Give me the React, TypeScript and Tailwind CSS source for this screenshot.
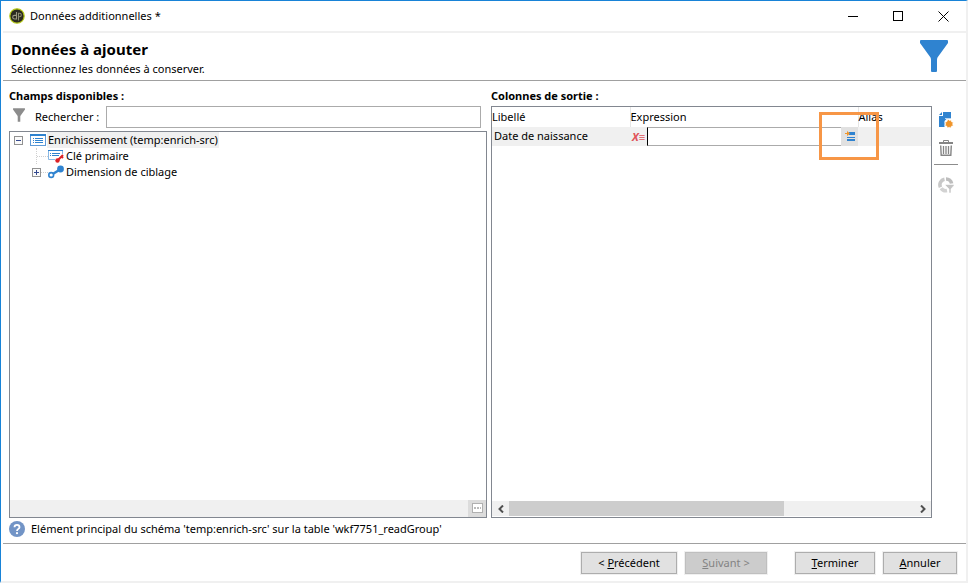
import { ReactNode, useState } from "react";

function AppLogo() {
  return (
    <svg className="h-4 w-4" viewBox="0 0 16 16" aria-hidden="true">
      <circle cx="8" cy="8" r="7.2" fill="#2b2a20" stroke="#b5c916" strokeWidth="1.2" />
      <path d="M7.500 4v7H5.500a1.500 1.500 0 0 1 0-3.600h2" fill="none" stroke="#9a9880" strokeWidth="1.100" />
      <path d="M9.500 12.500V5.200h1a1.500 1.500 0 0 1 0 3.600h-1" fill="none" stroke="#8f8e74" strokeWidth="1.100" />
    </svg>
  );
}

function FunnelIcon({ className }: { className: string }) {
  return (
    <svg className={className} viewBox="0 0 28 32" aria-hidden="true">
      <path
        fill="currentColor"
        d="M1 0h26q1 0 1 1v2L17.5 17.5Q17 18.500 17 20v11q0 1-1 1h-4q-1 0-1-1V20q0-1.500-.5-2.500L0 3V1q0-1 1-1z"
      />
    </svg>
  );
}

function TableIcon() {
  return (
    <svg className="h-4 w-4" viewBox="0 0 16 16" aria-hidden="true">
      <rect x="0.500" y="2.500" width="15" height="11" fill="#fff" stroke="#5f9bd8" />
      <path d="M0 3h16" stroke="#2f83d0" strokeWidth="2" />
      <path d="M3 6.500h1M3 8.500h1M3 10.500h1M5 6.500h8M5 8.500h8M5 10.500h8" stroke="#2f83d0" />
    </svg>
  );
}

function KeyIcon() {
  return (
    <svg className="h-4 w-4" viewBox="0 0 16 16" aria-hidden="true">
      <path d="M7 11.500H0.500v-9h14V6" fill="none" stroke="#8ab8e4" />
      <path d="M0 2.500h15" stroke="#2f83d0" />
      <path d="M2 5.500h1M2 7.500h1M4 5.500h8M4 7.500h7" stroke="#2f83d0" />
      <path d="M10 12l5-5M13 8l2 2" stroke="#dc2226" strokeWidth="2" />
      <circle cx="9.500" cy="12.500" r="2.200" fill="#dc2226" />
    </svg>
  );
}

function LinkIcon() {
  return (
    <svg className="h-4 w-4" viewBox="0 0 16 16" aria-hidden="true">
      <path d="M4 10.500l8-5" stroke="#2f83d0" strokeWidth="2.500" />
      <circle cx="3.200" cy="11" r="2.400" fill="#fff" stroke="#2f83d0" strokeWidth="1.600" />
      <circle cx="12.500" cy="5" r="3.400" fill="#2f83d0" />
    </svg>
  );
}

function EditIcon() {
  return (
    <svg className="h-3 w-3" viewBox="0 0 12 12" aria-hidden="true">
      <path d="M5 1h6v3H5zM3 6h8v1H3zM3 8h8v2H3z" fill="#2f83d0" />
      <path d="M1 2h2V0l3 2.500L3 5V3H1z" fill="#f0952a" />
    </svg>
  );
}

function NewIcon() {
  return (
    <svg className="h-4 w-4" viewBox="0 0 16 16" aria-hidden="true">
      <path d="M5 0h8v6.500H9L6.500 9v6H1V4h4z" fill="#2f83d0" />
      <path d="M1 3L4 0v3z" fill="#2f83d0" />
      <path d="M7 6.500h6" stroke="#b9d7f1" />
      <path
        d="M10 7l1.200 1.400L13 8l.5 1.800 1.800.6L14.600 12l.7 1.700-1.900.5-.6 1.700-1.700-.7-1.600.7-.7-1.700-1.900-.6.8-1.700-.7-1.600 1.800-.6z"
        fill="#f0952a"
        stroke="#fff"
        strokeWidth="0.600"
      />
    </svg>
  );
}

function TrashIcon() {
  return (
    <svg className="h-4 w-4" viewBox="0 0 16 16" fill="none" stroke="#858585" aria-hidden="true">
      <path d="M1 3h14" strokeWidth="2" />
      <path d="M5.500 2.500v-2h5v2" />
      <path d="M2.700 5.500l.5 9.700h9.600l.5-9.700" strokeWidth="1.400" />
      <path d="M5.500 6v8M8 6v8M10.500 6v8" strokeWidth="1.300" />
    </svg>
  );
}

function DistributionIcon() {
  return (
    <svg className="h-4 w-4" viewBox="0 0 16 16" fill="none" aria-hidden="true">
      <path d="M6.500 2.200a5.600 5.600 0 0 0-4 8" stroke="#c8c8c8" strokeWidth="3.600" />
      <path d="M8 2a5.600 5.600 0 0 1 5.600 4.500" stroke="#bdbdbd" strokeWidth="3.600" />
      <path d="M3.200 11.200A5.600 5.600 0 0 0 9 13.600" stroke="#d2d2d2" strokeWidth="3.600" />
      <path d="M7.500 7.500H16v1L13 12v4h-2v-4L7.500 8.500z" fill="#c4c4c4" stroke="#fff" strokeWidth="0.600" />
    </svg>
  );
}

function Toggle({ open, label, onClick }: { open: boolean; label: string; onClick?: () => void }) {
  return (
    <button type="button" aria-label={label} aria-expanded={open} onClick={onClick} className="relative z-10">
      <svg className="h-[9px] w-[9px]" viewBox="0 0 9 9" fill="none" aria-hidden="true">
        <rect x="0.500" y="0.500" width="8" height="8" fill="#fafafa" stroke="#919191" />
        <path d={open ? "M2 4.500h5" : "M2 4.500h5M4.500 2v5"} stroke="#34498f" />
      </svg>
    </button>
  );
}

function FooterButton({ children, disabled, className }: { children: ReactNode; disabled?: boolean; className: string }) {
  return (
    <button
      type="button"
      disabled={disabled}
      className={`h-[22px] border border-[#adadad] bg-[#e1e1e1] text-[11px] outline outline-[#f0f0f0] disabled:border-[#bfbfbf] disabled:bg-[#cccccc] disabled:text-[#838383] ${className}`}
    >
      {children}
    </button>
  );
}

function TitleBar() {
  return (
    <div className="flex h-[30px] items-center pl-2">
      <AppLogo />
      <span className="ml-[5px] flex-1 text-[11px] leading-4">Données additionnelles *</span>
      <button type="button" aria-label="Réduire" className="flex h-full w-[45px] items-center justify-center">
        <svg className="h-[11px] w-[11px]" viewBox="0 0 11 11" stroke="#000">
          <path d="M0 5.500h10" />
        </svg>
      </button>
      <button type="button" aria-label="Agrandir" className="flex h-full w-[45px] items-center justify-center">
        <svg className="h-[11px] w-[11px]" viewBox="0 0 11 11" fill="none" stroke="#000">
          <rect x="0.500" y="0.500" width="9" height="9" />
        </svg>
      </button>
      <button type="button" aria-label="Fermer" className="flex h-full w-[45px] items-center justify-center">
        <svg className="h-[11px] w-[11px]" viewBox="0 0 11 11" stroke="#000">
          <path d="M0.500 0.500l10 10M10.500 0.500l-10 10" />
        </svg>
      </button>
    </div>
  );
}

function FieldTree() {
  const [open, setOpen] = useState(true);

  return (
    <div className="flex min-h-0 flex-1 flex-col border border-[#828790]">
      <ul className="flex-1 text-[11px] leading-4">
        <li>
          <div className="flex h-4 items-center pl-1">
            <Toggle open={open} label="Enrichissement" onClick={() => setOpen(!open)} />
            <span className="ml-[7px]">
              <TableIcon />
            </span>
            <span className="ml-px bg-[#f0f0f0] px-px">Enrichissement (temp:enrich-src)</span>
          </div>
          {open && (
            <ul className="ml-[26px]">
              <li className="flex h-4 items-center border-l border-dotted border-[#d0d0d0]">
                <span className="w-[11px] border-t border-dotted border-[#d0d0d0]" />
                <KeyIcon />
                <span className="ml-0.5">Clé primaire</span>
              </li>
              <li className="-ml-1 flex h-4 items-center">
                <Toggle open={false} label="Dimension de ciblage" />
                <span className="w-[7px] border-t border-dotted border-[#d0d0d0]" />
                <LinkIcon />
                <span className="ml-0.5">Dimension de ciblage</span>
              </li>
            </ul>
          )}
        </li>
      </ul>
      <div className="flex h-[17px] justify-end bg-[#f0f0f0]">
        <button type="button" aria-label="Plus" className="flex w-[18px] items-center justify-center bg-[#dcdcdc]">
          <svg className="h-[11px] w-[11px]" viewBox="0 0 11 11" aria-hidden="true">
            <rect x="0.500" y="0.500" width="10" height="9" fill="#fff" stroke="#b0b0b0" />
            <path d="M2 5h2M5 5h2M8 5h1" stroke="#777" />
          </svg>
        </button>
      </div>
    </div>
  );
}

function OutputColumns() {
  const [expression, setExpression] = useState("");

  return (
    <div className="flex min-h-0 flex-1 flex-col border border-[#828790]">
      <div className="flex-1">
        <table className="w-full table-fixed text-left text-[11px]">
          <colgroup>
            <col className="w-[138px]" />
            <col className="w-[228px]" />
            <col />
          </colgroup>
          <thead>
            <tr className="h-5">
              <th className="border-r border-[#e5e5e5] p-0 font-normal">Libellé</th>
              <th className="border-r border-[#e5e5e5] p-0 font-normal">Expression</th>
              <th className="p-0 font-normal">Alias</th>
            </tr>
          </thead>
          <tbody>
            <tr className="h-[19px] bg-[#f0f0f0]">
              <td className="p-0 pl-0.5">Date de naissance</td>
              <td className="p-0">
                <div className="flex items-center">
                  <span className="w-[17px] text-center text-[11px] leading-4 font-bold text-[#e0555a]">
                    <i>X</i>≡
                  </span>
                  <input
                    type="text"
                    aria-label="Expression"
                    value={expression}
                    onChange={(e) => setExpression(e.target.value)}
                    className="h-[19px] min-w-0 flex-1 border border-r-0 border-[#ababab] border-l-black bg-white px-1 outline-none"
                  />
                  <div className="relative">
                    <button
                      type="button"
                      aria-label="Editer l'expression"
                      className="flex h-[19px] w-[17px] items-center justify-center bg-[#e1e1e1]"
                    >
                      <EditIcon />
                    </button>
                    <span className="pointer-events-none absolute -top-[15px] -left-[22px] h-12 w-[60px] border-3 border-[#f79646]" />
                  </div>
                </div>
              </td>
              <td className="p-0" />
            </tr>
          </tbody>
        </table>
      </div>
      <div className="mb-px flex h-[15px] bg-[#f0f0f0]">
        <button type="button" aria-label="Défiler à gauche" className="flex w-[17px] items-center justify-center">
          <svg className="h-2 w-2" viewBox="0 0 8 8" fill="none" stroke="#505050" strokeWidth="2">
            <path d="M6 0.500L2.500 4 6 7.500" />
          </svg>
        </button>
        <div className="flex-1">
          <div className="h-full w-[68%] bg-[#cdcdcd]" />
        </div>
        <button type="button" aria-label="Défiler à droite" className="flex w-[17px] items-center justify-center">
          <svg className="h-2 w-2" viewBox="0 0 8 8" fill="none" stroke="#505050" strokeWidth="2">
            <path d="M2 0.500L5.500 4 2 7.500" />
          </svg>
        </button>
      </div>
    </div>
  );
}

function App() {
  return (
    <div className="flex h-screen min-h-96 flex-col border-t border-r-2 border-b-2 border-l border-t-[#1883d7] border-r-[#f0f0f0] border-b-[#f0f0f0] border-l-[#1883d7] bg-white font-['Noto_Sans','Open_Sans',sans-serif] text-black">
      <TitleBar />
      <header className="ml-0.5 flex h-[50px] justify-between border-t-2 border-b border-t-[#f0f0f0] border-b-[#a0a0a0] pr-[18px] pl-2">
        <div className="pt-1.5">
          <h1 className="text-[15px] leading-5 font-bold">Données à ajouter</h1>
          <p className="text-[11px] leading-5">Sélectionnez les données à conserver.</p>
        </div>
        <FunnelIcon className="mt-[7px] h-8 w-7 text-[#2f83d0]" />
      </header>

      <main className="flex min-h-0 flex-1 gap-1 pt-[7px] pr-2 pl-2">
        <section className="flex min-w-0 flex-[478] flex-col">
          <h2 className="h-[18px] text-[11px] leading-4 font-bold">Champs disponibles :</h2>
          <div className="mb-[3px] flex items-center pr-1.5">
            <FunnelIcon className="mb-1 ml-1 h-3.5 w-3 text-[#8c8c8c]" />
            <label htmlFor="search" className="ml-2.5 w-[71px] text-[11px] leading-4">
              Rechercher :
            </label>
            <input id="search" type="text" className="h-[22px] min-w-0 flex-1 border border-[#ababab] px-1 text-[11px] outline-none" />
          </div>
          <FieldTree />
        </section>
        <section className="flex min-w-0 flex-[441] flex-col">
          <h2 className="h-[18px] text-[11px] leading-4 font-bold">Colonnes de sortie :</h2>
          <OutputColumns />
        </section>
        <div className="-ml-0.5 flex w-6 flex-col items-center pt-6">
          <button type="button" aria-label="Ajouter">
            <NewIcon />
          </button>
          <button type="button" aria-label="Supprimer" className="mt-3">
            <TrashIcon />
          </button>
          <hr className="my-2 w-full border-[#8c8c8c]" />
          <button type="button" aria-label="Distribution des valeurs" disabled className="mt-1">
            <DistributionIcon />
          </button>
        </div>
      </main>

      <div className="flex h-[25px] items-start gap-1.5 pt-[3px] pl-2">
        <svg className="h-4 w-4" viewBox="0 0 16 16" aria-hidden="true">
          <circle cx="8" cy="8" r="8" fill="#7294c6" />
          <path d="M5.500 6.200c0-3.200 5-3.200 5 0C10.500 8 8 7.800 8 10" fill="none" stroke="#fff" strokeWidth="1.800" />
          <circle cx="8" cy="12.200" r="1.100" fill="#fff" />
        </svg>
        <p className="text-[11px] leading-4">Elément principal du schéma 'temp:enrich-src' sur la table 'wkf7751_readGroup'</p>
      </div>

      <footer className="ml-0.5 flex h-[38px] items-start justify-end gap-2 border-t border-[#a0a0a0] pt-2 pr-[9px]">
        <FooterButton className="w-24">
          &lt; <u>P</u>récédent
        </FooterButton>
        <FooterButton className="mr-5 w-[82px]" disabled>
          <u>S</u>uivant &gt;
        </FooterButton>
        <FooterButton className="w-20">
          <u>T</u>erminer
        </FooterButton>
        <FooterButton className="w-[74px]">
          <u>A</u>nnuler
        </FooterButton>
      </footer>
    </div>
  );
}

export default App;
